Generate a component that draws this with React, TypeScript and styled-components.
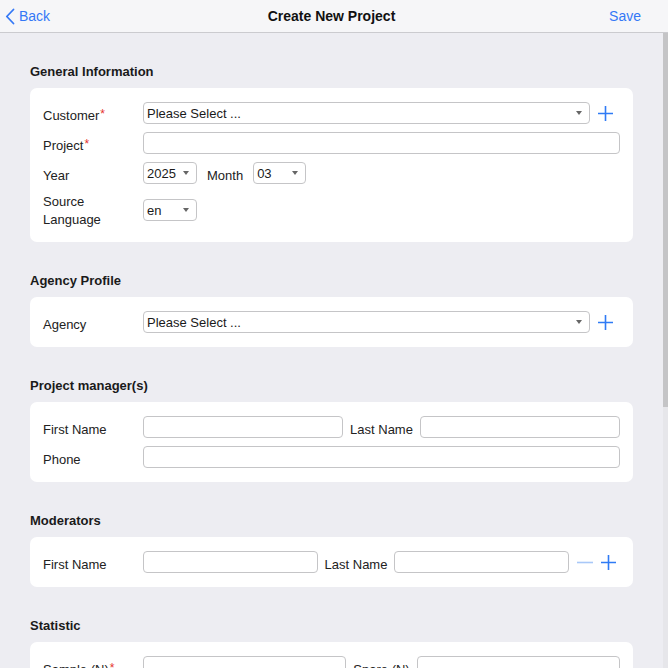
import React from "react";
import styled, { createGlobalStyle } from "styled-components";

const GlobalStyle = createGlobalStyle`
  * { box-sizing: border-box; }
  html, body { margin: 0; padding: 0; height: 100%; }
  body {
    background: #ededf2;
    font-family: "Liberation Sans", Arial, sans-serif;
    color: #1c1c1e;
  }
`;

const Page = styled.div`
  position: relative;
  display: flex;
  flex-direction: column;
  height: 668px;
  overflow: hidden;
`;

const NavBar = styled.header`
  flex-shrink: 0;
  height: 33px;
  display: grid;
  grid-template-columns: 1fr auto 1fr;
  align-items: center;
  padding: 0 10px 0 5px;
  background: #f6f6f8;
  border-bottom: 1px solid #cbcbcf;
`;

const NavButton = styled.button<{ $align?: "left" | "right" }>`
  display: flex;
  align-items: center;
  justify-self: ${(p) => (p.$align === "right" ? "end" : "start")};
  margin-right: ${(p) => (p.$align === "right" ? "17px" : "0")};
  gap: 4px;
  padding: 0;
  border: none;
  background: none;
  font-family: inherit;
  font-size: 14px;
  color: #3478f6;
  cursor: pointer;

  svg {
    width: 10px;
    height: 17px;
  }
`;

const NavTitle = styled.h1`
  margin: 0;
  font-size: 14px;
  font-weight: 700;
  color: #111;
`;

const Content = styled.main`
  flex: 1;
  overflow: hidden;
  padding: 30px 35px 0 30px;
`;

/* overlay scroll indicator on the right edge */
const ScrollTrack = styled.div`
  position: absolute;
  top: 33px;
  right: 0;
  bottom: 0;
  width: 5px;
  background: #e6e6ea;
`;

const ScrollThumb = styled.div`
  height: 374px;
  background: #c4c4c6;
`;

const Section = styled.section`
  margin-bottom: 30px;
`;

const SectionTitle = styled.h2`
  margin: 0 0 7px;
  font-size: 13px;
  line-height: 18px;
  font-weight: 700;
  color: #1a1a1a;
`;

const Card = styled.div`
  display: flex;
  flex-direction: column;
  gap: 8px;
  padding: 14px 13px;
  background: #fff;
  border-radius: 7px;
`;

const Row = styled.div`
  display: flex;
  align-items: center;
  min-height: 22px;
`;

const Label = styled.label<{ $multiline?: boolean }>`
  flex-shrink: 0;
  width: 100px;
  height: ${(p) => (p.$multiline ? "36px" : "22px")};
  padding-top: ${(p) => (p.$multiline ? "1px" : "5px")};
  font-size: 13px;
  line-height: 18px;
  color: #222;
  white-space: nowrap;
`;

const InlineLabel = styled.label<{ $gap?: number }>`
  flex-shrink: 0;
  height: 22px;
  margin: 0 ${(p) => p.$gap ?? 7}px;
  padding-top: 5px;
  font-size: 13px;
  line-height: 18px;
  color: #222;
  white-space: nowrap;
`;

const Required = styled.span`
  position: relative;
  top: -2px;
  margin-left: 1px;
  font-size: 12px;
  line-height: 0;
  color: #e5322d;
`;

const TextInput = styled.input<{ $width?: number }>`
  flex: ${(p) => (p.$width ? "0 0 auto" : "1")};
  width: ${(p) => (p.$width ? `${p.$width}px` : "auto")};
  min-width: 0;
  height: 22px;
  padding: 0 4px;
  border: 1px solid #c5c5c7;
  border-radius: 4px;
  background: #fff;
  font-family: inherit;
  font-size: 13px;
  outline: none;
`;

const SelectBox = styled.div<{ $width?: number }>`
  flex: ${(p) => (p.$width ? "0 0 auto" : "1")};
  width: ${(p) => (p.$width ? `${p.$width}px` : "auto")};
  min-width: 0;
  height: 22px;
  display: flex;
  align-items: center;
  justify-content: space-between;
  padding: 0 7px 0 3px;
  border: 1px solid #c5c5c7;
  border-radius: 4px;
  background: #fff;
  font-size: 13px;
  color: #1a1a1a;

  &::after {
    content: "";
    width: 0;
    height: 0;
    border-left: 3.5px solid transparent;
    border-right: 3.5px solid transparent;
    border-top: 4px solid #666;
  }
`;

const Actions = styled.div<{ $width: number }>`
  flex-shrink: 0;
  width: ${(p) => p.$width}px;
  display: flex;
  align-items: center;
  gap: 7px;
  padding-left: 7px;
`;

const IconButton = styled.button<{ $faded?: boolean }>`
  display: flex;
  padding: 0;
  border: none;
  background: none;
  color: ${(p) => (p.$faded ? "#a9c8f8" : "#2f7bf5")};
  cursor: pointer;

  svg {
    width: 17px;
    height: 17px;
  }
`;

const PlusIcon = () => (
  <svg viewBox="0 0 17 17" fill="none" stroke="currentColor" strokeWidth="1.6">
    <path d="M8.5 1v15M1 8.5h15" />
  </svg>
);

const MinusIcon = () => (
  <svg viewBox="0 0 17 17" fill="none" stroke="currentColor" strokeWidth="1.6">
    <path d="M1 8.5h16" />
  </svg>
);

const BackIcon = () => (
  <svg viewBox="0 0 10 17" fill="none" stroke="currentColor" strokeWidth="1.8" strokeLinecap="round" strokeLinejoin="round">
    <path d="M8.5 1.5L1.8 8.5l6.7 7" />
  </svg>
);

export default function App() {
  return (
    <>
      <GlobalStyle />
      <Page>
        <NavBar>
          <NavButton>
            <BackIcon />
            Back
          </NavButton>
          <NavTitle>Create New Project</NavTitle>
          <NavButton $align="right">Save</NavButton>
        </NavBar>

        <Content>
          <Section>
            <SectionTitle>General Information</SectionTitle>
            <Card>
              <Row>
                <Label>
                  Customer<Required>*</Required>
                </Label>
                <SelectBox>Please Select ...</SelectBox>
                <Actions $width={30}>
                  <IconButton>
                    <PlusIcon />
                  </IconButton>
                </Actions>
              </Row>
              <Row>
                <Label>
                  Project<Required>*</Required>
                </Label>
                <TextInput />
              </Row>
              <Row>
                <Label>Year</Label>
                <SelectBox $width={54}>2025</SelectBox>
                <InlineLabel $gap={10}>Month</InlineLabel>
                <SelectBox $width={53}>03</SelectBox>
              </Row>
              <Row>
                <Label $multiline>
                  Source
                  <br />
                  Language
                </Label>
                <SelectBox $width={54}>en</SelectBox>
              </Row>
            </Card>
          </Section>

          <Section>
            <SectionTitle>Agency Profile</SectionTitle>
            <Card>
              <Row>
                <Label>Agency</Label>
                <SelectBox>Please Select ...</SelectBox>
                <Actions $width={30}>
                  <IconButton>
                    <PlusIcon />
                  </IconButton>
                </Actions>
              </Row>
            </Card>
          </Section>

          <Section>
            <SectionTitle>Project manager(s)</SectionTitle>
            <Card>
              <Row>
                <Label>First Name</Label>
                <TextInput />
                <InlineLabel>Last Name</InlineLabel>
                <TextInput />
              </Row>
              <Row>
                <Label>Phone</Label>
                <TextInput />
              </Row>
            </Card>
          </Section>

          <Section>
            <SectionTitle>Moderators</SectionTitle>
            <Card>
              <Row>
                <Label>First Name</Label>
                <TextInput />
                <InlineLabel>Last Name</InlineLabel>
                <TextInput />
                <Actions $width={51}>
                  <IconButton $faded>
                    <MinusIcon />
                  </IconButton>
                  <IconButton>
                    <PlusIcon />
                  </IconButton>
                </Actions>
              </Row>
            </Card>
          </Section>

          <Section>
            <SectionTitle>Statistic</SectionTitle>
            <Card>
              <Row>
                <Label>
                  Sample (N)<Required>*</Required>
                </Label>
                <TextInput />
                <InlineLabel>Spare (N)</InlineLabel>
                <TextInput />
              </Row>
            </Card>
          </Section>
        </Content>

        <ScrollTrack>
          <ScrollThumb />
        </ScrollTrack>
      </Page>
    </>
  );
}
